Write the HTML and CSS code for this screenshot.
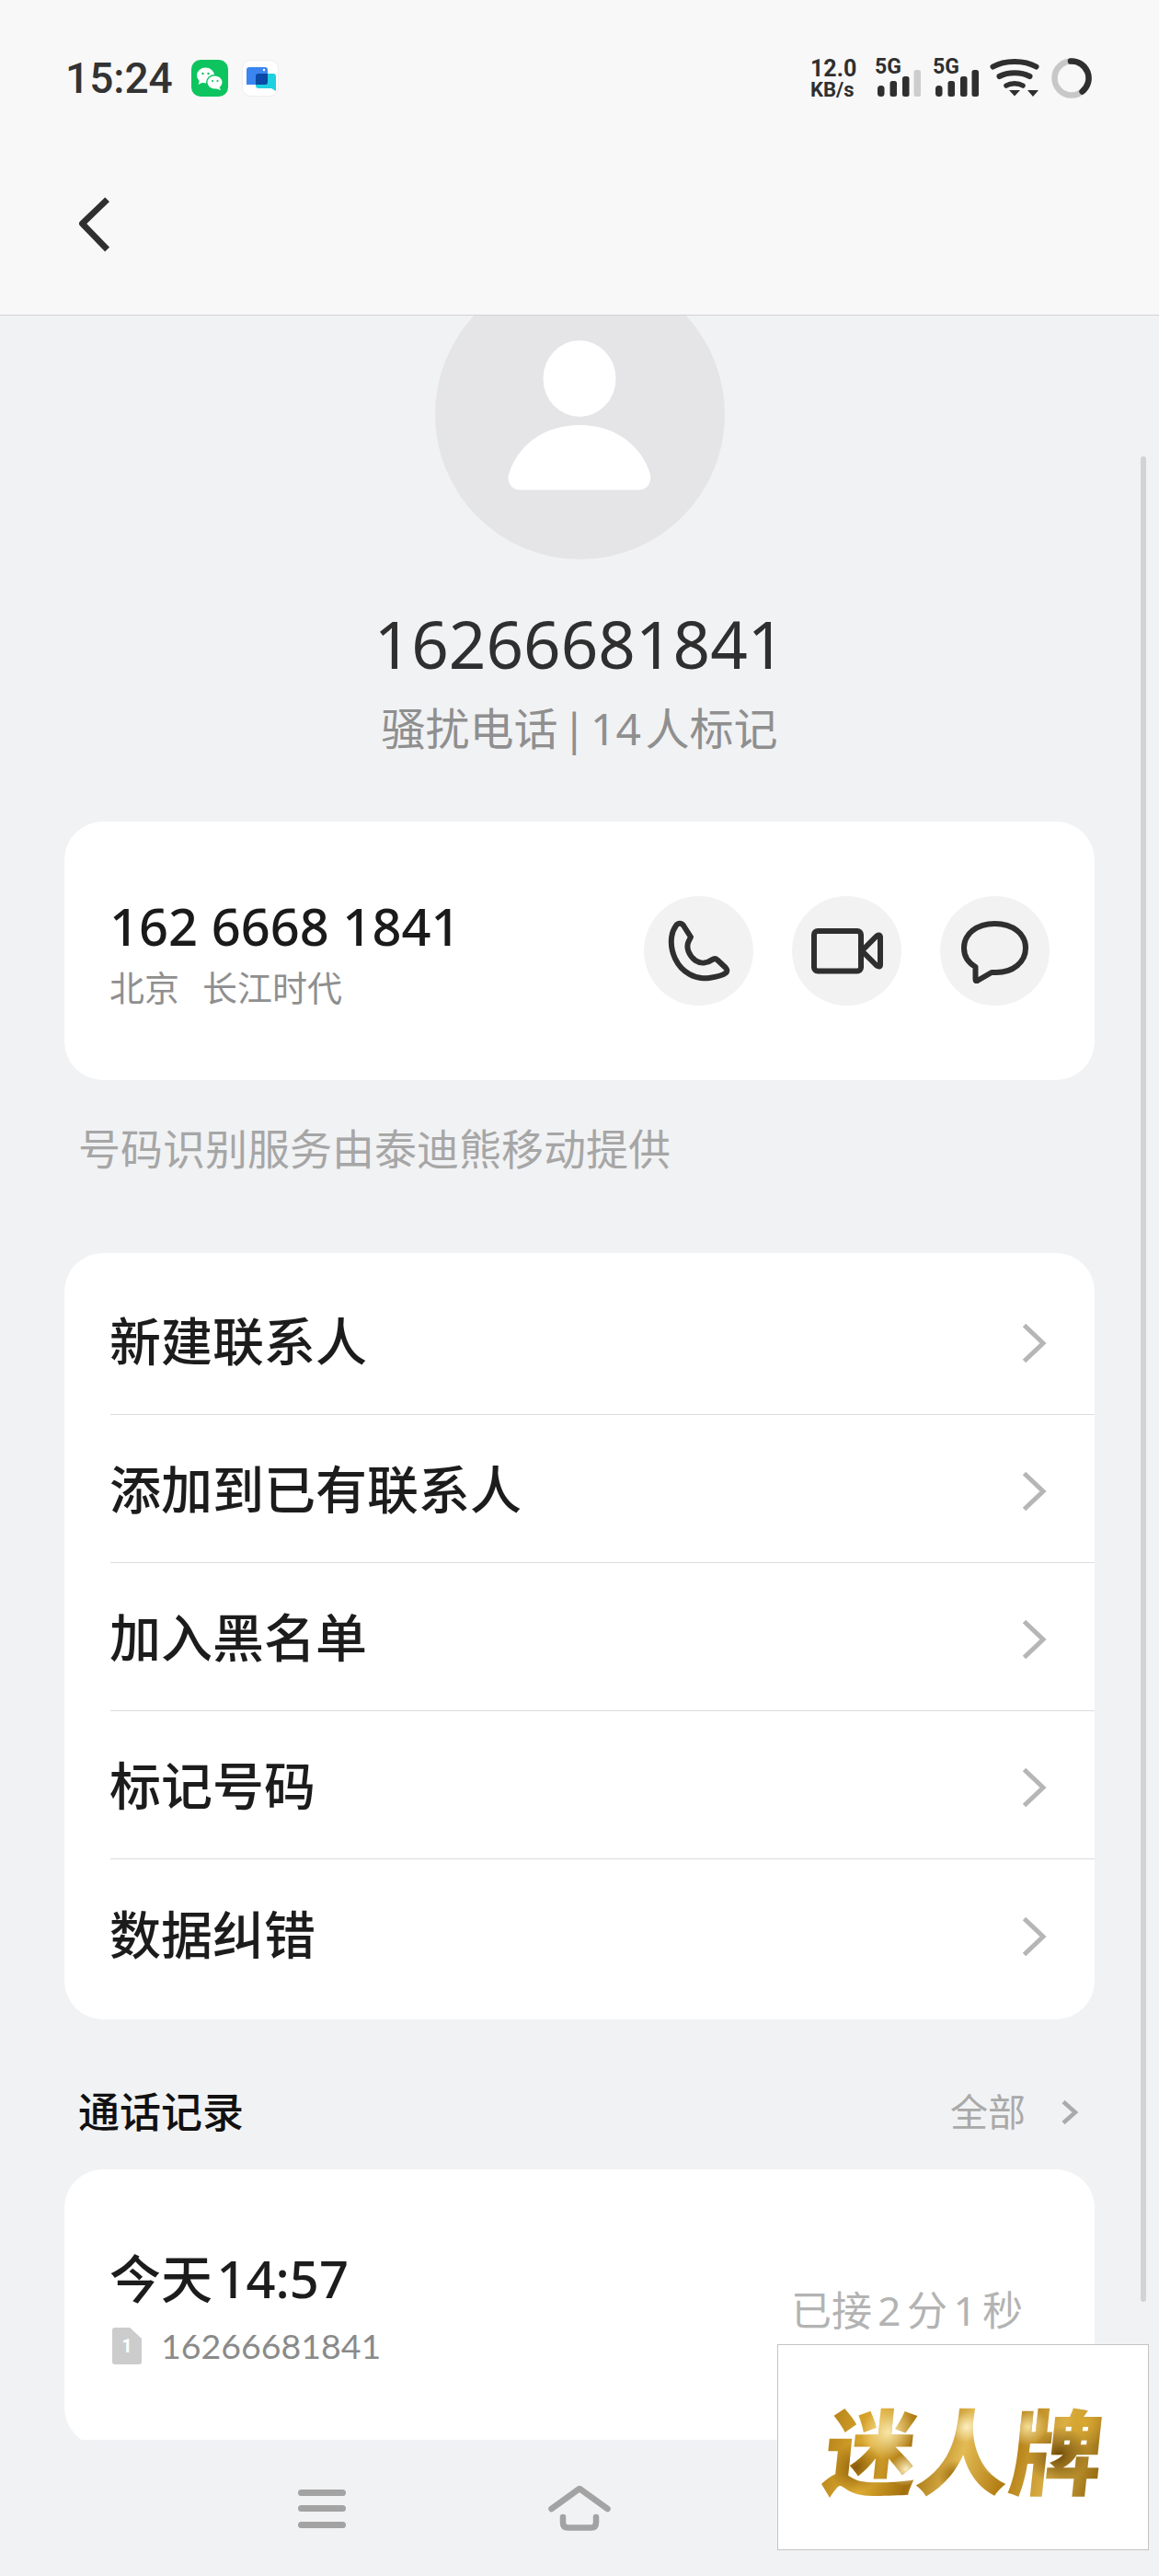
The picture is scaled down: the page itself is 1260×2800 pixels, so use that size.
FILE: index.html
```html
<!doctype html>
<html lang="zh-CN">
  <head>
    <meta charset="UTF-8" />
    <meta name="viewport" content="width=device-width, initial-scale=1.0" />
    <title>16266681841</title>
    <link rel="stylesheet" href="styles.css">
  </head>
  <body>
    <div class="screen">
      <header class="top-bar">
        <div class="status-bar">
          <div class="status-left">
            <span class="clock">15:24</span>
            <svg class="app-icon wechat-icon" viewBox="0 0 40 40">
              <rect width="40" height="40" rx="10" fill="#0dc45f" />
              <ellipse cx="15.5" cy="17" rx="9.5" ry="8.5" fill="#fff" />
              <path d="M9 22l-1.5 5 6-3z" fill="#fff" />
              <ellipse cx="25.5" cy="24.5" rx="9.5" ry="8.5" fill="#0dc45f" />
              <ellipse cx="25.5" cy="24.5" rx="8" ry="7" fill="#fff" />
              <path d="M30 29l2 4-6-2z" fill="#fff" />
              <circle cx="12.5" cy="15" r="1.2" fill="#0dc45f" />
              <circle cx="18.5" cy="15" r="1.2" fill="#0dc45f" />
              <circle cx="23" cy="23" r="1.1" fill="#0dc45f" />
              <circle cx="28.5" cy="23" r="1.1" fill="#0dc45f" />
            </svg>
            <svg class="app-icon chat-icon" viewBox="0 0 40 40">
              <rect x=".5" y=".5" width="39" height="39" rx="9" fill="#fff" stroke="#eeeef0" />
              <path d="M15 15h19a3 3 0 0 1 3 3v16l-5-3H18a3 3 0 0 1-3-3z" fill="#1fd0e0" />
              <path d="M8 8h17a3 3 0 0 1 3 3v13a3 3 0 0 1-3 3H5V11a3 3 0 0 1 3-3z" fill="#3a85f0" />
              <path d="M18 15h10v9a3 3 0 0 1-3 3h-10V18a3 3 0 0 1 3-3z" fill="#0b4aa6" />
              <circle cx="24" cy="11" r="1.2" fill="#fff" />
            </svg>
          </div>
          <div class="status-right">
            <div class="speed">
              <span class="speed-num">12.0</span>
              <span class="speed-unit">KB/s</span>
            </div>
            <div class="signal">
              <span class="signal-label">5G</span>
              <svg class="signal-bars" viewBox="0 0 50 30">
                <rect x="3" y="17" width="7.5" height="12" rx="3.5" fill="#2f2f2f" />
                <rect x="16.500" y="12" width="7.500" height="17" rx="2.500" fill="#2f2f2f" />
                <rect x="30" y="7" width="7.500" height="22" rx="2.500" fill="#2f2f2f" />
                <rect x="42.500" y="0" width="7.500" height="29" rx="2.500" fill="#cdcdcd" />
              </svg>
            </div>
            <div class="signal">
              <span class="signal-label">5G</span>
              <svg class="signal-bars" viewBox="0 0 50 30">
                <rect x="3" y="17" width="7.5" height="12" rx="3.5" fill="#2f2f2f" />
                <rect x="16.500" y="12" width="7.500" height="17" rx="2.500" fill="#2f2f2f" />
                <rect x="30" y="7" width="7.500" height="22" rx="2.500" fill="#2f2f2f" />
                <rect x="42.500" y="0" width="7.500" height="29" rx="2.500" fill="#2f2f2f" />
              </svg>
            </div>
            <svg class="wifi" viewBox="0 0 54 42" fill="none" stroke="#2f2f2f" stroke-linecap="round">
              <path d="M3.500 9.500C16 2 38 2 50.500 9.500" stroke-width="6" />
              <path d="M10.500 20C20 15 34 15 43.500 20" stroke-width="6" />
              <path d="M18 30c5-3 13-3 18 0" stroke-width="5.500" />
              <path d="M21 35h12l-6 6.500z" fill="#2f2f2f" stroke="none" />
              <path d="M41 35h12l-6 7z" fill="#2f2f2f" stroke="none" />
            </svg>
            <svg class="ring" viewBox="0 0 44 44" fill="none" stroke-width="6.500">
              <circle cx="22" cy="22" r="18.500" stroke="#c8c8c8" />
              <path d="M21 3.500A18.500 18.500 0 0 1 33.500 36.500" stroke="#2f2f2f" stroke-linecap="round" />
            </svg>
          </div>
        </div>
        <div class="tool-bar">
          <svg class="back-icon" viewBox="0 0 40 64" fill="none" stroke="#2f2f2f" stroke-width="7" stroke-linejoin="round">
            <path d="M33 3L5 30l28 29" />
          </svg>
        </div>
      </header>

      <main class="content">
        <div class="profile">
          <div class="avatar">
            <svg class="avatar-person" viewBox="0 0 156 163" fill="#fff">
              <ellipse cx="78" cy="41.500" rx="39.500" ry="41.500" />
              <path d="M1 146C10 114 40 92 78 92s68 22 77 54c1.500 8-3 16.500-12 16.500H13C4 162.500-1 154 1 146z" />
            </svg>
          </div>
          <h1 class="caller-number">16266681841</h1>
          <p class="caller-tag">骚扰电话 | 14 人标记</p>
        </div>

        <section class="card number-card">
          <div class="number-info">
            <div class="number-main">162 6668 1841</div>
            <div class="number-place"><span>北京</span><span>长江时代</span></div>
          </div>
          <div class="number-actions">
            <div class="action-btn">
              <svg class="phone-icon" viewBox="0 0 68 68" fill="none" stroke="#2f2f2f" stroke-width="6" stroke-linejoin="round">
                <path d="M17 6C15 3 11 3 9 6C2.500 15 2 29 8 42C15 57 30 65 45 63C52 62 60 60 63 57.500C65 56 64.500 53.500 63 52L54 43.500C52 41.500 50.500 41.500 48.500 43C43 47 36 48 30 44C23 39 19.500 30 22.500 23.500L25 18.500z" />
              </svg>
            </div>
            <div class="action-btn">
              <svg class="video-icon" viewBox="0 0 78 50" fill="none" stroke="#2f2f2f" stroke-width="6" stroke-linejoin="round">
                <rect x="3" y="3" width="51" height="43.500" rx="4" />
                <path d="M55 24.500L71 8.500Q75 6 75 10V39.500Q75 43 71 40.500z" />
              </svg>
            </div>
            <div class="action-btn">
              <svg class="message-icon" viewBox="0 0 73 68" fill="none" stroke="#2f2f2f" stroke-width="6" stroke-linejoin="round">
                <path d="M15.500 50C7 45 3 38 3 29.500C3 14 17 3 36.500 3C56 3 70 14 70 29.500C70 45 56 56 38 56H33L17.500 65Q15.500 66 15.500 63.500z" />
              </svg>
            </div>
          </div>
        </section>

        <p class="provider-note">号码识别服务由泰迪熊移动提供</p>

        <section class="card menu-card">
          <div class="menu-row">
            <span>新建联系人</span>
            <svg class="row-arrow" viewBox="0 0 28 44"><path d="M3.500 2.500L24 22 3.500 41.500" /></svg>
          </div>
          <div class="menu-row">
            <span>添加到已有联系人</span>
            <svg class="row-arrow" viewBox="0 0 28 44"><path d="M3.500 2.500L24 22 3.500 41.500" /></svg>
          </div>
          <div class="menu-row">
            <span>加入黑名单</span>
            <svg class="row-arrow" viewBox="0 0 28 44"><path d="M3.500 2.500L24 22 3.500 41.500" /></svg>
          </div>
          <div class="menu-row">
            <span>标记号码</span>
            <svg class="row-arrow" viewBox="0 0 28 44"><path d="M3.500 2.500L24 22 3.500 41.500" /></svg>
          </div>
          <div class="menu-row">
            <span>数据纠错</span>
            <svg class="row-arrow" viewBox="0 0 28 44"><path d="M3.500 2.500L24 22 3.500 41.500" /></svg>
          </div>
        </section>

        <div class="call-head">
          <span class="call-title">通话记录</span>
          <span class="call-all">全部</span>
          <svg class="all-arrow" viewBox="0 0 20 28"><path d="M3 2.500L16 14 3 25.500" /></svg>
        </div>

        <section class="card call-card">
          <div class="call-info">
            <div class="call-time">今天 14:57</div>
            <div class="call-line">
              <span class="sim-badge">1</span>
              <span class="call-number">16266681841</span>
            </div>
          </div>
          <div class="call-length">已接 2 分 1 秒</div>
        </section>
      </main>

      <nav class="nav-bar">
        <svg class="nav-menu" viewBox="0 0 52 42" fill="#a3a3a3">
          <rect y="0" width="52" height="7" rx="3.500" />
          <rect y="17" width="52" height="7" rx="3.500" />
          <rect y="35" width="52" height="7" rx="3.500" />
        </svg>
        <svg class="nav-home" viewBox="0 0 68 50" fill="none" stroke="#a3a3a3" stroke-width="6.500" stroke-linecap="round" stroke-linejoin="round">
          <path d="M3.500 25L34 3l30.500 22" />
          <path d="M16 34v6q0 5.500 5.500 5.500h25q5.500 0 5.500-5.500v-6" />
        </svg>
      </nav>

      <div class="scroll-thumb"></div>
      <div class="watermark"><span>迷人牌</span></div>
    </div>
  </body>
</html>
```

FILE: styles.css
```css
* {
  box-sizing: border-box;
}

body {
  margin: 0;
  padding: 0;
  font-family: "Noto Sans", "Noto Sans CJK SC", sans-serif;
  background: #f1f2f4;
}

h1,
p {
  margin: 0;
  font-weight: 400;
}

.screen {
  position: relative;
  width: 1260px;
  height: 2800px;
  display: flex;
  flex-direction: column;
  overflow: hidden;
  background: #f1f2f4;
}

/* status bar + back button */
.top-bar {
  height: 343px;
  flex: none;
  background: #f8f8f8;
  border-bottom: 1px solid #d2d2d6;
}

.status-bar {
  height: 170px;
  display: flex;
  justify-content: space-between;
  align-items: center;
  padding: 0 73px 0 71px;
}

.status-left {
  display: flex;
  align-items: center;
}

.clock {
  width: 137px;
  font-family: Roboto, sans-serif;
  font-size: 46px;
  font-weight: 500;
  color: #333;
}

.app-icon {
  width: 40px;
  height: 40px;
}

.wechat-icon {
  margin-right: 15px;
}

.status-right {
  display: flex;
  align-items: flex-start;
  height: 44px;
}

.speed {
  width: 70px;
  display: flex;
  flex-direction: column;
  font-family: Roboto, sans-serif;
  color: #2f2f2f;
}

.speed-num {
  font-size: 25px;
  font-weight: 700;
  line-height: 24px;
}

.speed-unit {
  font-size: 22px;
  font-weight: 700;
  line-height: 22px;
}

.signal {
  width: 63px;
  display: grid;
}

.signal-label,
.signal-bars {
  grid-area: 1 / 1;
}

.signal-label {
  font-family: Roboto, sans-serif;
  font-size: 23px;
  font-weight: 700;
  line-height: 20px;
  color: #2f2f2f;
}

.signal-bars {
  width: 50px;
  height: 30px;
  margin-top: 13px;
}

.wifi {
  width: 54px;
  height: 42px;
  margin-left: -1px;
}

.ring {
  width: 44px;
  height: 44px;
  margin-left: 13px;
}

.tool-bar {
  padding: 44px 0 0 84px;
}

.back-icon {
  display: block;
  width: 40px;
  height: 62px;
}

/* scrolling area */
.content {
  flex: 1;
  min-height: 0;
  overflow: hidden;
  padding: 0 70px;
}

.profile {
  display: flex;
  flex-direction: column;
  align-items: center;
}

.avatar {
  width: 315px;
  height: 315px;
  margin-top: -50px;
  flex: none;
  border-radius: 50%;
  background: #e5e5e8;
  display: flex;
  justify-content: center;
  padding-top: 77px;
}

.avatar-person {
  width: 156px;
  height: 163px;
}

.caller-number {
  margin-top: 52px;
  font-size: 71px;
  line-height: 80px;
  color: #2f2f2f;
}

.caller-tag {
  margin-top: 22px;
  font-size: 48px;
  line-height: 60px;
  color: #8f8f8f;
  word-spacing: -8px;
}

.card {
  background: #fff;
  border-radius: 42px;
}

.number-card {
  margin-top: 71px;
  height: 281px;
  display: flex;
  justify-content: space-between;
  align-items: center;
  padding: 0 49px 0 49px;
}

.number-info {
  padding-top: 6px;
}

.number-main {
  font-size: 56px;
  font-weight: 500;
  line-height: 60px;
  color: #1a1a1a;
}

.number-place {
  margin-top: 12px;
  font-size: 38px;
  line-height: 50px;
  color: #8f8f8f;
}

.number-place span + span {
  margin-left: 25px;
}

.number-actions {
  display: flex;
  gap: 42px;
}

.action-btn {
  width: 119px;
  height: 119px;
  border-radius: 50%;
  background: #f2f2f3;
  display: flex;
  justify-content: center;
  align-items: center;
}

.phone-icon {
  width: 68px;
  height: 68px;
}

.video-icon {
  width: 78px;
  height: 50px;
}

.message-icon {
  width: 73px;
  height: 68px;
  margin-top: 3px;
}

.provider-note {
  margin: 44px 0 0 15px;
  font-size: 46px;
  line-height: 60px;
  color: #a6a6a6;
}

.menu-card {
  margin-top: 84px;
  padding: 15px 0 13px 50px;
}

.menu-row {
  height: 161px;
  display: flex;
  justify-content: space-between;
  align-items: center;
  padding-right: 52px;
  font-size: 56px;
  font-weight: 500;
  color: #1c1c1c;
  border-bottom: 1px solid #dcdcdf;
}

.menu-row span {
  margin: 0 0 5px -1px;
}

.menu-row:last-child {
  border-bottom: none;
}

.row-arrow {
  width: 28px;
  height: 44px;
  margin-top: 6px;
  fill: none;
  stroke: #b6b6b6;
  stroke-width: 5;
}

.call-head {
  margin: 68px 17px 0 15px;
  display: flex;
  align-items: center;
  height: 60px;
}

.call-title {
  flex: 1;
  font-size: 45px;
  font-weight: 500;
  color: #111;
}

.call-all {
  font-size: 41px;
  color: #a9a9a9;
}

.all-arrow {
  width: 20px;
  height: 28px;
  margin: 6px 0 0 38px;
  fill: none;
  stroke: #ababab;
  stroke-width: 4.5;
}

.call-card {
  margin-top: 35px;
  height: 301px;
  display: flex;
  justify-content: space-between;
  padding: 86px 78px 0 49px;
}

.call-time {
  font-size: 56px;
  font-weight: 500;
  line-height: 64px;
  color: #1c1c1c;
  word-spacing: -10px;
}

.call-line {
  margin-top: 17px;
  display: flex;
  align-items: center;
}

.sim-badge {
  width: 32px;
  height: 40px;
  margin: 0 21px 0 3px;
  background: #cccccc;
  border-radius: 3px;
  clip-path: polygon(0 0, 60% 0, 100% 30%, 100% 100%, 0 100%);
  display: flex;
  justify-content: center;
  align-items: center;
  font-family: Roboto, sans-serif;
  font-size: 20px;
  font-weight: 700;
  color: #fff;
}

.call-number {
  font-family: Lato, sans-serif;
  font-size: 37.500px;
  font-weight: 400;
  line-height: 50px;
  color: #8a8a8a;
}

.call-length {
  margin-top: 37px;
  font-size: 44px;
  line-height: 60px;
  color: #b3b3b3;
  word-spacing: -5px;
}

.nav-bar {
  height: 148px;
  flex: none;
  display: flex;
  align-items: flex-start;
  gap: 220px;
  padding: 50px 0 0 324px;
  background: #f1f2f4;
}

.nav-menu {
  width: 52px;
  height: 42px;
  margin-top: 4px;
}

.nav-home {
  width: 68px;
  height: 50px;
}

/* things on top */
.scroll-thumb {
  position: absolute;
  left: 1240px;
  top: 496px;
  width: 6px;
  height: 2006px;
  border-radius: 3px;
  background: #d3d3d6;
}

.watermark {
  position: absolute;
  left: 845px;
  top: 2548px;
  width: 404px;
  height: 224px;
  background: #fff;
  border: 1px solid #c4c4c4;
  display: flex;
  justify-content: center;
  align-items: center;
}

.watermark span {
  font-family: "Noto Sans CJK SC", sans-serif;
  font-size: 101px;
  font-weight: 900;
  line-height: 110px;
  margin-left: 4px;
  transform: skewX(-6deg);
  color: transparent;
  background:
    radial-gradient(circle at 12% 70%, #8a5c08 0, rgba(138, 92, 8, 0) 10%),
    radial-gradient(circle at 22% 35%, #f8e7a8 0, rgba(248, 231, 168, 0) 12%),
    radial-gradient(circle at 30% 72%, #fff0c0 0, rgba(255, 240, 192, 0) 8%),
    radial-gradient(circle at 50% 30%, #fcefc0 0, rgba(252, 239, 192, 0) 10%),
    radial-gradient(circle at 47% 78%, #9a6a0a 0, rgba(154, 106, 10, 0) 9%),
    radial-gradient(circle at 62% 62%, #f8e6a6 0, rgba(248, 230, 166, 0) 9%),
    radial-gradient(circle at 72% 30%, #f5de95 0, rgba(245, 222, 149, 0) 9%),
    radial-gradient(circle at 84% 58%, #6f4a06 0, rgba(111, 74, 6, 0) 12%),
    radial-gradient(circle at 92% 25%, #d9a830 0, rgba(217, 168, 48, 0) 10%),
    linear-gradient(100deg, #b07d14, #e0ae35 18%, #a26f0c 34%, #e3bb55 50%, #b17c12 66%, #dcb24a 82%, #8d6209);
  -webkit-background-clip: text;
  background-clip: text;
}
```
